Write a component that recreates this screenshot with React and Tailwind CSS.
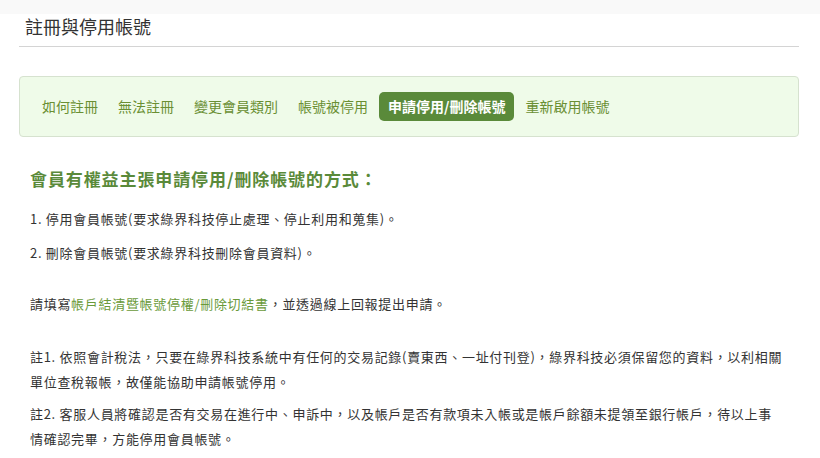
import React from 'react'

const tabs = ['如何註冊', '無法註冊', '變更會員類別', '帳號被停用', '申請停用/刪除帳號', '重新啟用帳號']

function App() {
  const active = 4

  return (
    <div className="min-h-[458px] bg-white text-[#333]" style={{fontFamily: '"Noto Sans CJK TC", "Noto Sans", sans-serif'}}>
      <div className="h-[14px] bg-[#f9f9f9]"></div>
      <div className="pl-[19px] w-[799px]">
        <div className="border-b border-[#d4d4d4] pl-[6px] pt-[1px] pb-[9px]">
          <h1 className="text-[18px] leading-[22px] text-[#333]">註冊與停用帳號</h1>
        </div>

        <div className="mt-[29px] h-[61px] rounded-[4px] border border-[#d6e2cf] bg-[#effbe9] flex items-center pl-[13px] gap-[2px]">
          {tabs.map((t, i) => (
            i === active ? (
              <div key={t} className="h-[29px] px-[9px] rounded-[5px] bg-[#5a8a3a] text-white font-bold text-[14px] flex items-center">{t}</div>
            ) : (
              <div key={t} className="h-[29px] px-[9px] text-[#6a8f33] text-[14px] flex items-center">{t}</div>
            )
          ))}
        </div>

        <div className="pl-[11px]">
          <h2 className="mt-[30px] text-[17px] leading-[24px] font-bold text-[#5a8a3a] tracking-[0.9px]">會員有權益主張申請停用/刪除帳號的方式：</h2>
          <p className="mt-[18px] text-[13px] leading-[20px] tracking-[0.7px]">1. 停用會員帳號(要求綠界科技停止處理、停止利用和蒐集)。</p>
          <p className="mt-[14px] text-[13px] leading-[20px] tracking-[0.7px]">2. 刪除會員帳號(要求綠界科技刪除會員資料)。</p>
          <p className="mt-[31px] text-[13px] leading-[20px] tracking-[0.7px]">請填寫<span className="text-[#6a9a3a]">帳戶結清暨帳號停權/刪除切結書</span>，並透過線上回報提出申請。</p>
          <p className="mt-[30px] text-[13px] leading-[25px] tracking-[0.7px] whitespace-nowrap">註1. 依照會計稅法，只要在綠界科技系統中有任何的交易記錄(賣東西、一址付刊登)，綠界科技必須保留您的資料，以利相關<br />單位查稅報帳，故僅能協助申請帳號停用。</p>
          <p className="mt-[7px] text-[13px] leading-[25px] tracking-[0.7px] whitespace-nowrap">註2. 客服人員將確認是否有交易在進行中、申訴中，以及帳戶是否有款項未入帳或是帳戶餘額未提領至銀行帳戶，待以上事<br />情確認完畢，方能停用會員帳號。</p>
        </div>
      </div>
    </div>
  )
}

export default App
